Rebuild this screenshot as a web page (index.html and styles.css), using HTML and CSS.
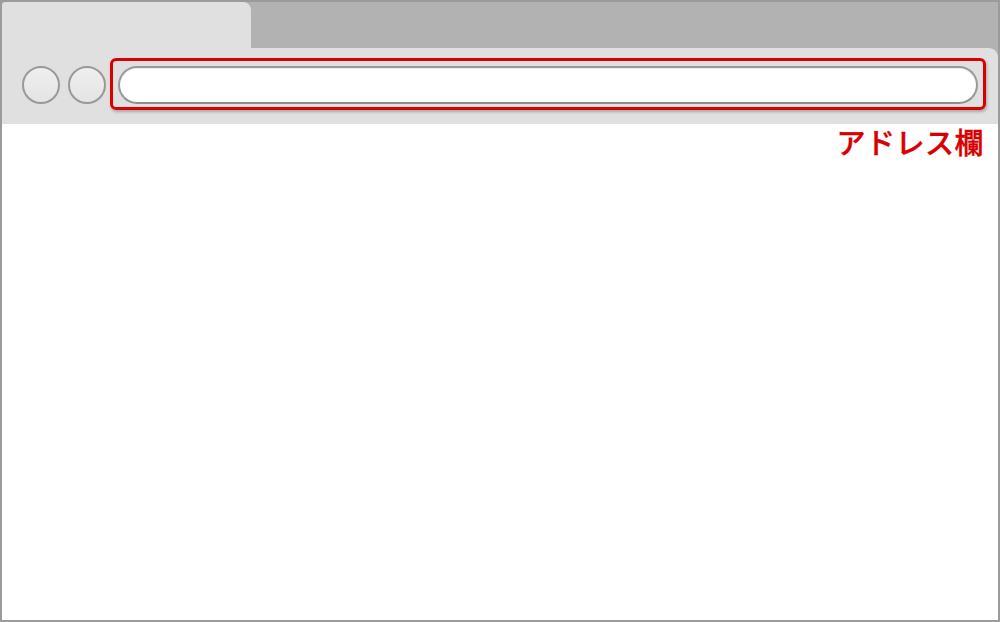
FILE: index.html
```html
<!DOCTYPE html>
<html lang="ja">
<head>
<meta charset="utf-8">
<link rel="stylesheet" href="styles.css">
</head>
<body>
<div class="window">
  <div class="tabbar">
    <div class="tab"></div>
  </div>
  <div class="toolbar">
    <div class="nav-btn"></div>
    <div class="nav-btn"></div>
    <div class="highlight">
      <div class="address"></div>
    </div>
  </div>
  <div class="content">
    <div class="label">アドレス欄</div>
  </div>
</div>
</body>
</html>
```
FILE: styles.css
```css
html, body {
  margin: 0;
  padding: 0;
}
body {
  font-family: "Noto Sans CJK JP", "Noto Sans", sans-serif;
}
.window {
  width: 1000px;
  height: 622px;
  box-sizing: border-box;
  border: 2px solid #9b9b9b;
  background: #b2b2b2;
  display: flex;
  flex-direction: column;
}
.tabbar {
  height: 46px;
  display: flex;
  flex-shrink: 0;
}
.tab {
  width: 249px;
  background: #e0e0e0;
  border-radius: 4px 8px 0 0;
}
.toolbar {
  height: 76px;
  flex-shrink: 0;
  background: #e0e0e0;
  border-top-right-radius: 9px;
  display: flex;
  align-items: center;
  padding: 0 12px 0 20px;
  box-sizing: border-box;
}
.nav-btn {
  width: 38px;
  height: 38px;
  box-sizing: border-box;
  border: 2px solid #999;
  border-radius: 50%;
  background: linear-gradient(#efefef, #e4e4e4);
  margin-right: 8px;
  margin-bottom: 2px;
  flex-shrink: 0;
}
.nav-btn + .nav-btn {
  margin-right: 4px;
}
.highlight {
  flex: 1;
  height: 52px;
  box-sizing: border-box;
  border: 3px solid #d80000;
  border-radius: 6px;
  padding: 5px 5px 3px 5px;
  box-shadow: 1px 2px 3px rgba(0, 0, 0, 0.25);
  margin-top: -4px;
}
.address {
  height: 38px;
  box-sizing: border-box;
  border: 2px solid #999;
  border-bottom-color: #8f8f8f;
  border-radius: 19px;
  background: #fff;
  box-shadow: inset 0 1px 1px rgba(0, 0, 0, 0.08);
}
.content {
  flex: 1;
  background: #fff;
  display: flex;
  justify-content: flex-end;
  align-items: flex-start;
  padding: 0 14px 0 0;
}
.label {
  color: #d80000;
  font-size: 29px;
  font-weight: 500;
  -webkit-text-stroke: 0.4px #d80000;
  line-height: 35px;
  letter-spacing: 0.5px;
}
```
